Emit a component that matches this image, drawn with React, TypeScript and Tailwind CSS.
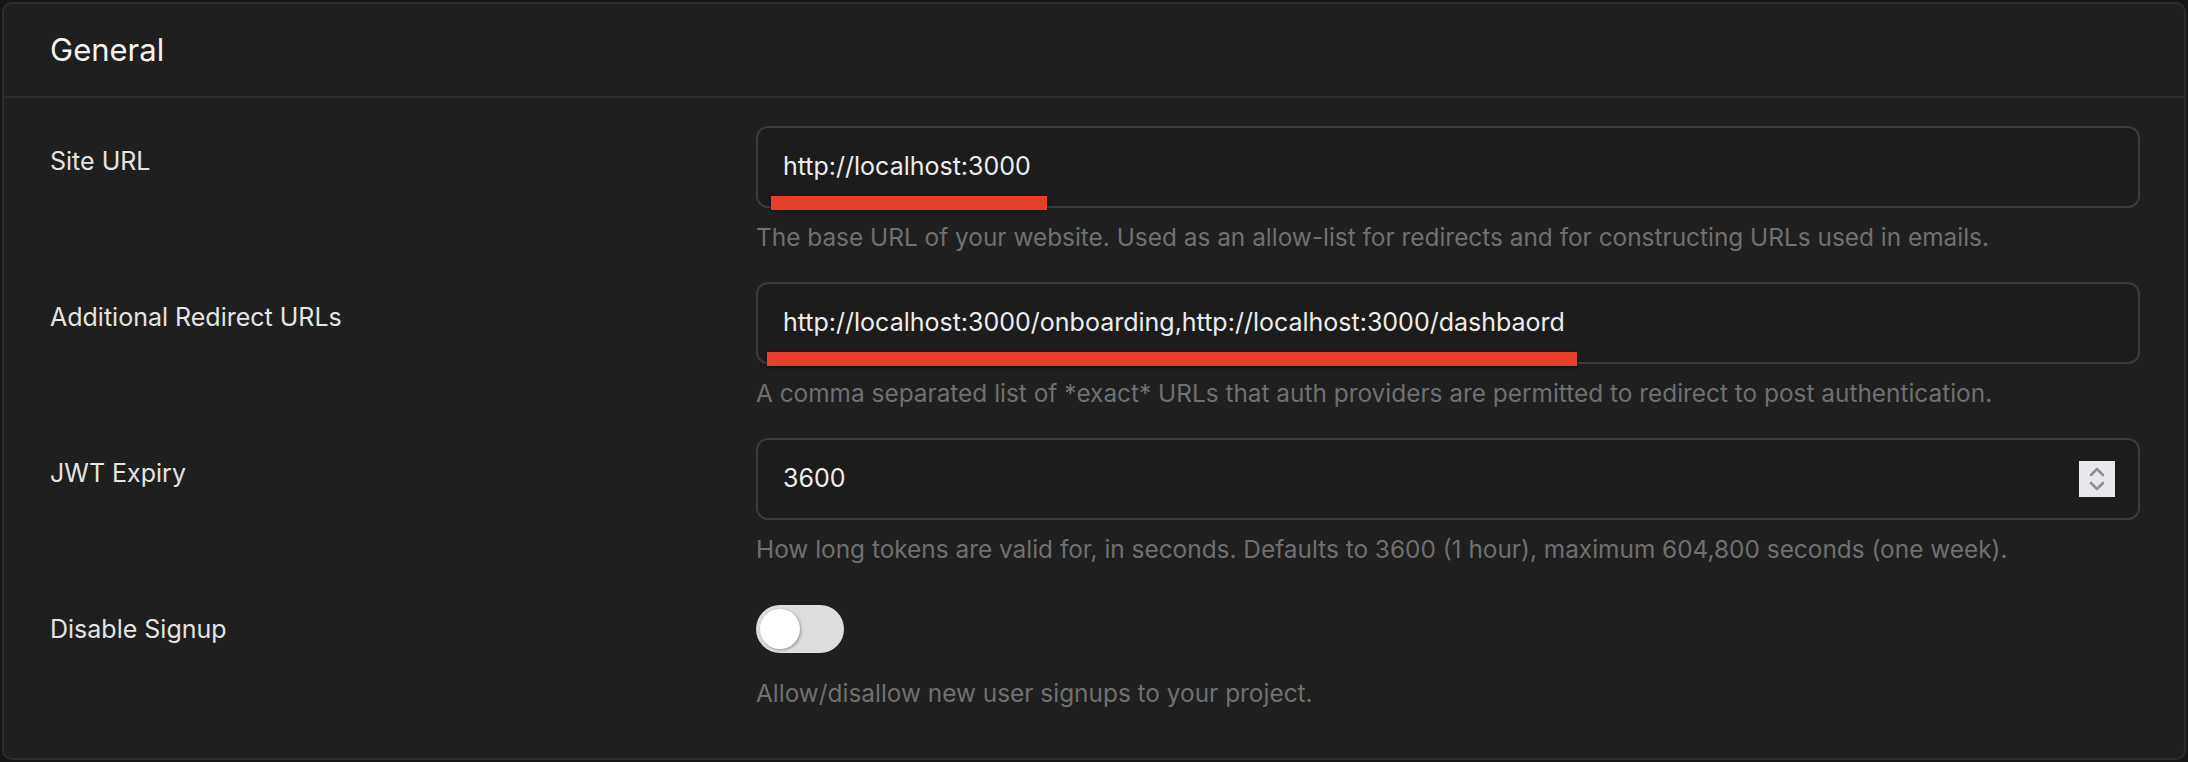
import React from "react";

const font = { fontFamily: "Inter, 'Noto Sans', sans-serif" };

function Row({ label, children, desc }: { label: string; children: React.ReactNode; desc: string }) {
  return (
    <div className="grid grid-cols-[706px_1fr]">
      <div className="pt-[18px] text-[25px] leading-[34px] text-[#e4e4e4]">{label}</div>
      <div className="flex flex-col">
        {children}
        <div className="mt-[12px] text-[24.4px] leading-[34px] text-[#707070]">{desc}</div>
      </div>
    </div>
  );
}

function Input({ value, mark, markLeft, spinner }: { value: string; mark?: number; markLeft?: number; spinner?: boolean }) {
  return (
    <div className="relative flex h-[82px] items-center rounded-[12px] border-2 border-[#3a3a3a] bg-[#1c1c1c] pl-[25px] pr-[23px]">
      <span className="text-[25px] text-[#ededed]">{value}</span>
      {spinner && (
        <div className="ml-auto flex h-[36px] w-[36px] flex-col items-center justify-center bg-[#e8e8ec]">
          <svg width="20" height="28" viewBox="0 0 20 28" fill="none" stroke="#8e8e93" strokeWidth="2.6" strokeLinecap="round" strokeLinejoin="round">
            <path d="M4 10 L10 4 L16 10" />
            <path d="M4 18 L10 24 L16 18" />
          </svg>
        </div>
      )}
      {mark !== undefined && (
        <div
          className="absolute top-[68px] h-[14px] bg-[#e6402a] shadow-[0_1px_3px_rgba(0,0,0,0.5)]"
          style={{ left: markLeft, width: mark }}
        />
      )}
    </div>
  );
}

export default function App() {
  return (
    <div className="h-[762px] w-full bg-[#161616] p-[2px]" style={font}>
      <div className="flex h-[758px] flex-col rounded-[10px] border-2 border-[#2c2c2c] bg-[#1f1f1f]">
        <div className="flex h-[94px] items-center border-b-2 border-[#2c2c2c] px-[46px]">
          <span className="text-[31px] text-[#f4f4f4]">General</span>
        </div>
        <div className="flex flex-col gap-[28px] pl-[46px] pr-[44px] pt-[28px]">
          <Row label="Site URL" desc="The base URL of your website. Used as an allow-list for redirects and for constructing URLs used in emails.">
            <Input value="http://localhost:3000" mark={276} markLeft={13} />
          </Row>
          <Row
            label="Additional Redirect URLs"
            desc="A comma separated list of *exact* URLs that auth providers are permitted to redirect to post authentication."
          >
            <Input value="http://localhost:3000/onboarding,http://localhost:3000/dashbaord" mark={810} markLeft={9} />
          </Row>
          <Row
            label="JWT Expiry"
            desc="How long tokens are valid for, in seconds. Defaults to 3600 (1 hour), maximum 604,800 seconds (one week)."
          >
            <Input value="3600" spinner />
          </Row>
          <Row label="Disable Signup" desc="Allow/disallow new user signups to your project.">
            <div className="flex h-[70px] items-center">
              <div className="flex h-[48px] w-[88px] items-center rounded-full bg-[#dedede] px-[4px]">
                <div className="h-[40px] w-[40px] rounded-full bg-white shadow-[1px_1px_3px_rgba(0,0,0,0.35)]" />
              </div>
            </div>
          </Row>
        </div>
      </div>
    </div>
  );
}
